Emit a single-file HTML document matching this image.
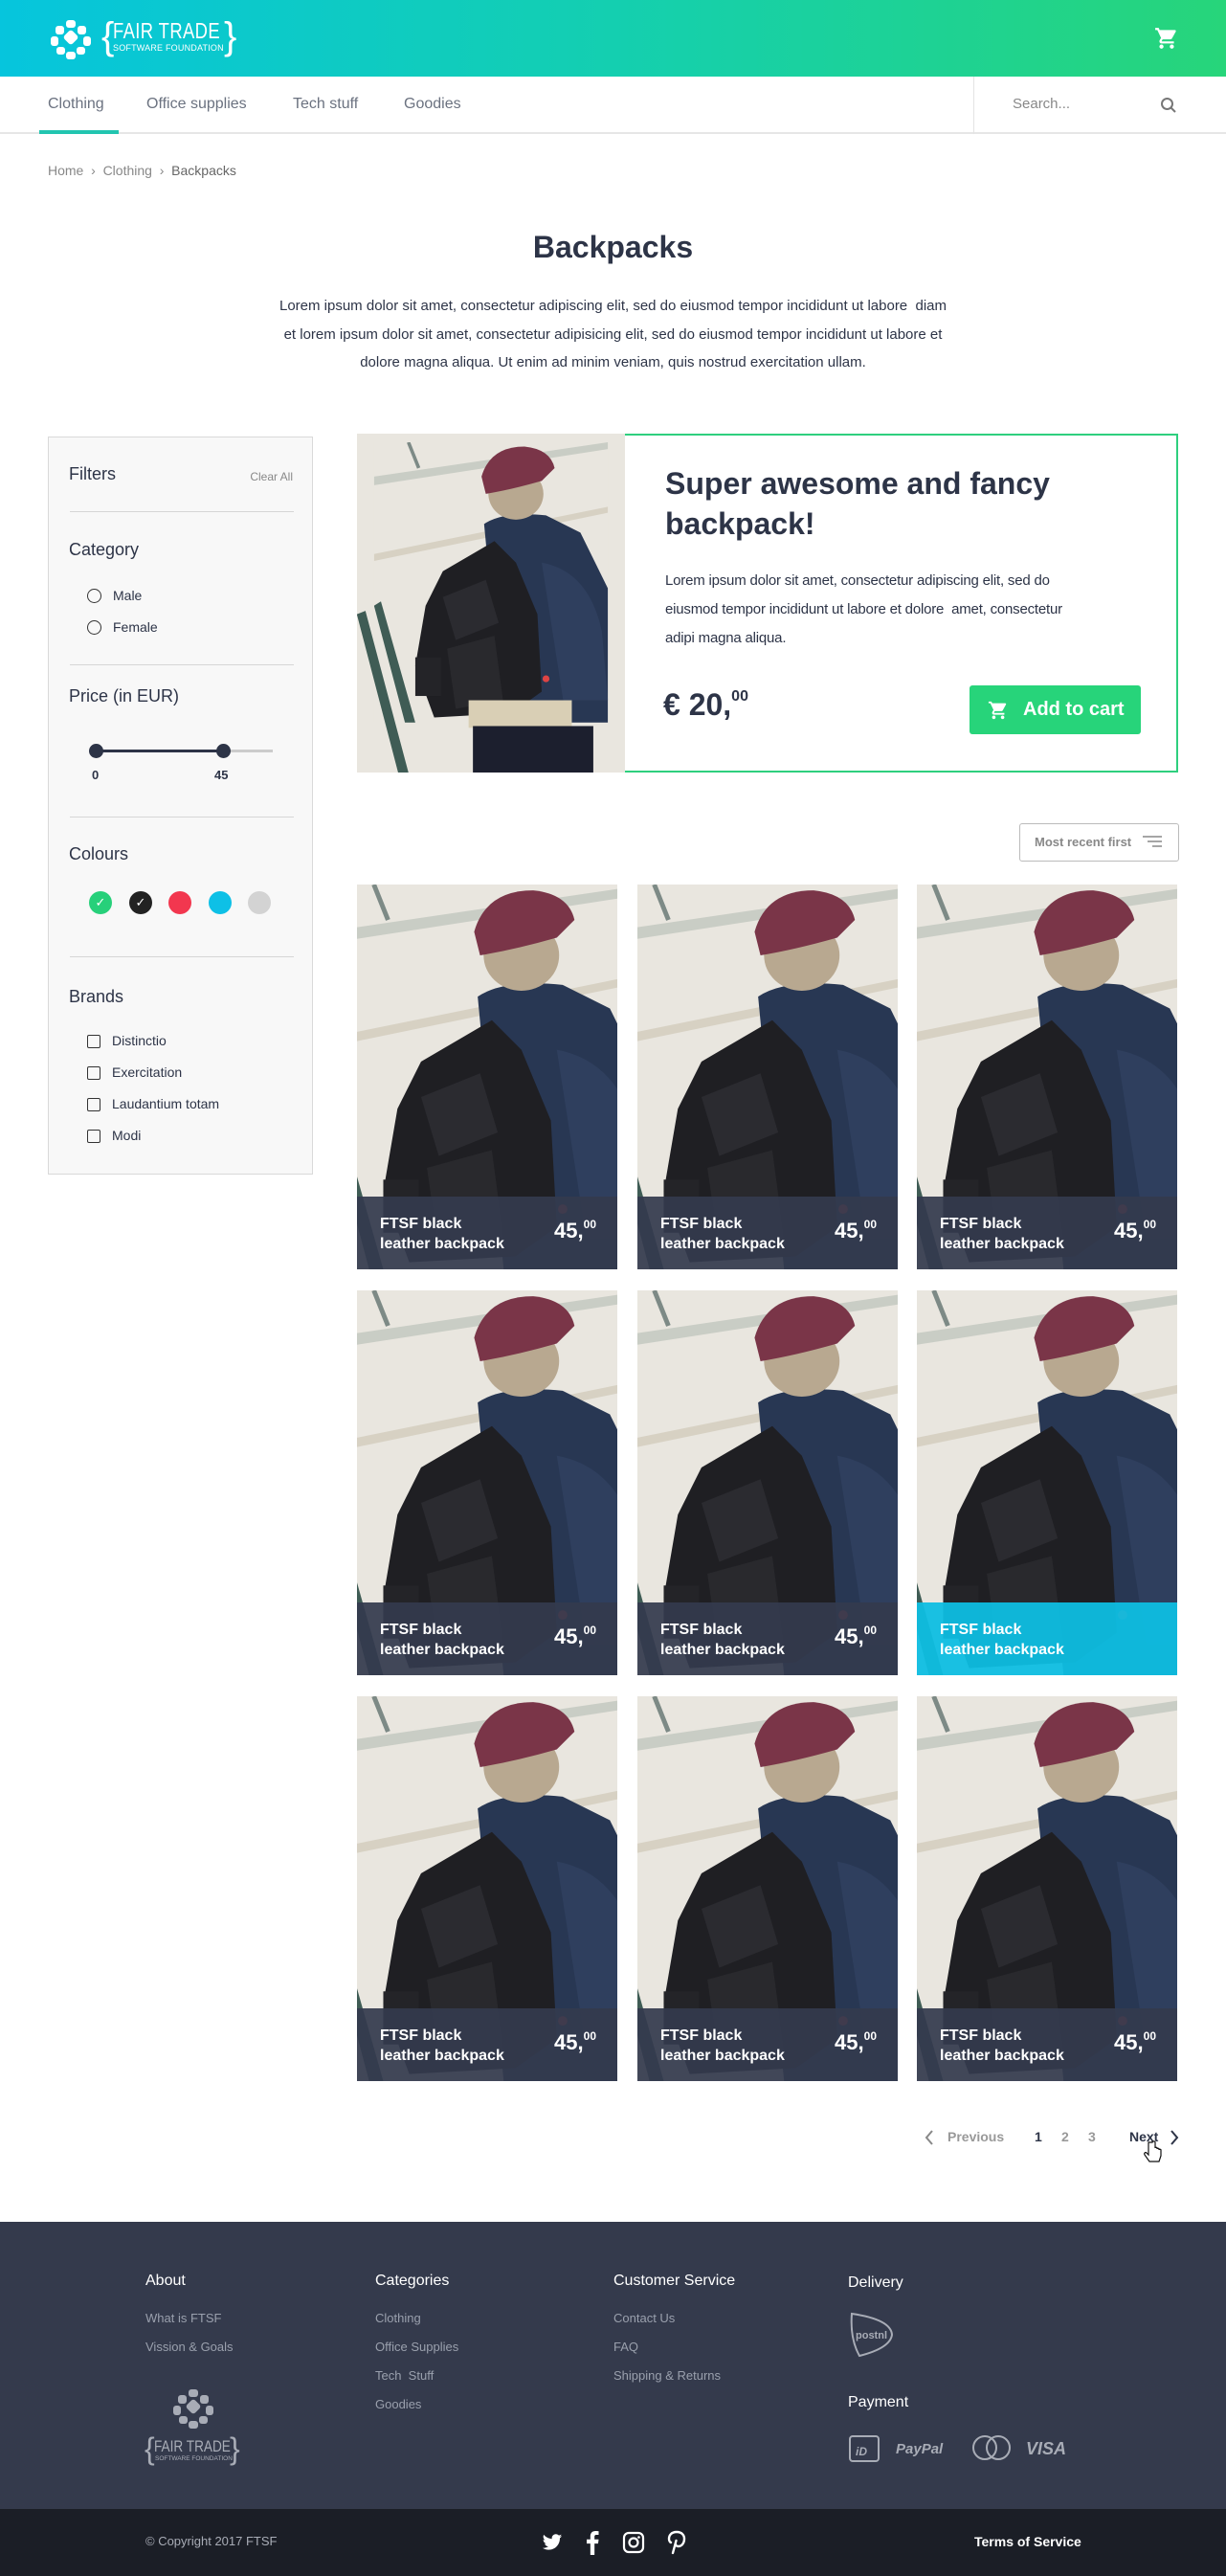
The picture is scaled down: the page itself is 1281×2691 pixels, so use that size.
<!DOCTYPE html>
<html><head><meta charset="utf-8">
<style>
*{margin:0;padding:0;box-sizing:border-box}
body{width:1281px;height:2691px;position:relative;background:#fff;font-family:"Liberation Sans",sans-serif;color:#2d3447;overflow:hidden}
.a{position:absolute;white-space:nowrap}
.hdr{position:absolute;left:0;top:0;width:1281px;height:80px;background:linear-gradient(90deg,#06c5dd 0%,#14cfb0 50%,#27d57a 100%)}
.nav{position:absolute;left:0;top:80px;width:1281px;height:60px;border-bottom:2px solid #e6e6e6}
.nav .i{position:absolute;top:20px;font-size:16px;color:#6b7280}
.side{position:absolute;left:50px;top:456px;width:277px;height:771px;background:#f8f8f8;border:1px solid #d9d9d9}
.hr{position:absolute;left:22px;width:234px;height:1px;background:#d6d6d6}
.side .t{position:absolute;left:21px;font-size:18px;color:#2d3447}
.opt{position:absolute;left:40px;font-size:14px;color:#2d3447}
.rad{display:inline-block;width:15px;height:15px;border:1.5px solid #333;border-radius:50%;vertical-align:-3px;margin-right:12px}
.chk{display:inline-block;width:14px;height:14px;border:1.5px solid #333;border-radius:2px;vertical-align:-3px;margin-right:12px}
.dot{position:absolute;width:24px;height:24px;border-radius:50%;top:931px}
.card{position:absolute;width:272px;height:402px;overflow:hidden}
.card svg{position:absolute;left:0;top:0}
.cap{position:absolute;left:0;bottom:0;width:100%;height:76px;background:rgba(52,58,78,.93);color:#fff}
.cap .n{position:absolute;left:24px;top:18px;font-size:16px;line-height:21px;font-weight:bold}
.cap .p{position:absolute;right:22px;top:22px;font-size:22px;font-weight:bold}
.cap .p sup{font-size:12px;vertical-align:10px}
.ft{position:absolute;left:0;top:2321px;width:1281px;height:301px;background:#343a4c}
.fb{position:absolute;left:0;top:2621px;width:1281px;height:70px;background:#1b1e26}
.fh{position:absolute;font-size:16px;color:#fff}
.fl{position:absolute;font-size:13px;color:#9aa0ad}
</style></head><body>
<svg width="0" height="0" style="position:absolute">
<defs>
<symbol id="ph" viewBox="0 0 272 326">
<rect width="272" height="326" fill="#e9e6df"/>
<polygon points="0,40 272,0 272,8 0,50" fill="#c9cdc5"/>
<polygon points="0,130 272,75 272,82 0,138" fill="#d7d1c3"/>
<line x1="40" y1="0" x2="52" y2="30" stroke="#7d8a86" stroke-width="4"/>
<polygon points="0,190 8,185 48,326 36,326" fill="#3f5c55"/>
<path d="M128,95 Q150,80 200,85 L240,105 L272,170 L272,326 L150,326 Z" fill="#283753"/>
<path d="M195,140 Q250,150 265,220 L272,300 L220,300 Z" fill="#2f3f5e"/>
<ellipse cx="165" cy="60" rx="32" ry="30" fill="#b8a890"/>
<path d="M125,40 Q135,5 175,5 Q205,8 210,30 L195,45 Q160,55 130,60 Z" fill="#7a3548"/>
<path d="M80,150 L140,115 L165,140 L190,200 L195,290 L160,315 L70,320 L48,260 L60,190 Z" fill="#1f1f23"/>
<path d="M80,180 L130,160 L145,210 L95,230 Z" fill="#2b2b30"/>
<path d="M85,240 L140,225 L150,300 L95,310 Z" fill="#29292d"/>
<rect x="48" y="250" width="30" height="45" fill="#242428"/>
<circle cx="200" cy="275" r="4" fill="#d44"/>
</symbol>
</defs>
</svg>

<div class="hdr">
<svg class="a" style="left:50px;top:17px" width="48" height="48" viewBox="0 0 48 48"><g fill="#fff"><rect x="19" y="4" width="10" height="8" rx="3"/><rect x="8" y="10" width="9" height="9" rx="3"/><rect x="31" y="10" width="9" height="9" rx="3"/><rect x="18" y="16" width="12" height="12" rx="3" transform="rotate(45 24 22)"/><rect x="3" y="21" width="8" height="10" rx="3"/><rect x="37" y="21" width="8" height="10" rx="3"/><rect x="9" y="32" width="9" height="8" rx="3"/><rect x="30" y="32" width="9" height="8" rx="3"/><rect x="19" y="37" width="10" height="8" rx="3"/></g></svg>
<div class="a" style="left:106px;top:14px;color:#fff;font-size:40px;line-height:48px;font-weight:200">{</div>
<div class="a" style="left:118px;top:19px;color:#fff;font-size:23px;letter-spacing:0.5px;transform:scaleX(.8);transform-origin:left">FAIR TRADE</div>
<div class="a" style="left:118px;top:45px;color:#fff;font-size:9px;letter-spacing:0.2px">SOFTWARE FOUNDATION</div>
<div class="a" style="left:234px;top:14px;color:#fff;font-size:40px;line-height:48px;font-weight:200">}</div>
<svg class="a" style="left:1206px;top:27px" width="26" height="26" viewBox="0 0 24 24"><path fill="#fff" d="M7 18c-1.1 0-2 .9-2 2s.9 2 2 2 2-.9 2-2-.9-2-2-2zM1 2v2h2l3.6 7.6-1.4 2.4c-.1.3-.2.6-.2 1 0 1.1.9 2 2 2h12v-2H7.4c-.1 0-.2-.1-.2-.2v-.1l.9-1.7h7.4c.8 0 1.4-.4 1.7-1l3.6-6.5c.1-.2.1-.3.1-.5 0-.6-.4-1-1-1H5.2l-.9-2H1zm16 16c-1.1 0-2 .9-2 2s.9 2 2 2 2-.9 2-2-.9-2-2-2z"/></svg>
</div>

<div class="nav">
<div class="i" style="left:50px">Clothing</div>
<div class="a" style="left:41px;top:56px;width:83px;height:4px;background:#22c5b0"></div>
<div class="i" style="left:153px">Office supplies</div>
<div class="i" style="left:306px">Tech stuff</div>
<div class="i" style="left:422px">Goodies</div>
<div class="a" style="left:1017px;top:0;width:1px;height:60px;background:#e3e3e3"></div>
<div class="i" style="left:1058px;font-size:15px;color:#888">Search...</div>
<svg class="a" style="left:1212px;top:21px" width="18" height="18" viewBox="0 0 18 18"><circle cx="7.5" cy="7.5" r="5.5" fill="none" stroke="#777" stroke-width="2"/><line x1="11.5" y1="11.5" x2="16" y2="16" stroke="#777" stroke-width="2"/></svg>
</div>

<div class="a" style="left:50px;top:170px;font-size:14px;color:#888">Home &nbsp;›&nbsp; Clothing &nbsp;›&nbsp; <span style="color:#666">Backpacks</span></div>

<div class="a" style="left:0;width:1281px;top:240px;text-align:center;font-size:32px;font-weight:bold;color:#2d3447">Backpacks</div>
<div class="a" style="left:230px;width:821px;top:305px;text-align:center;font-size:15px;line-height:29.5px;color:#2d3447;white-space:normal">Lorem ipsum dolor sit amet, consectetur adipiscing elit, sed do eiusmod tempor incididunt ut labore&nbsp; diam<br>et lorem ipsum dolor sit amet, consectetur adipisicing elit, sed do eiusmod tempor incididunt ut labore et<br>dolore magna aliqua. Ut enim ad minim veniam, quis nostrud exercitation ullam.</div>

<div class="side">
<div class="t" style="top:28px;font-size:18px">Filters</div>
<div class="a" style="right:20px;top:34px;font-size:12px;color:#888">Clear All</div>
<div class="hr" style="top:77px"></div>
<div class="t" style="top:107px">Category</div>
<div class="opt" style="top:157px"><span class="rad"></span>Male</div>
<div class="opt" style="top:190px"><span class="rad"></span>Female</div>
<div class="hr" style="top:237px"></div>
<div class="t" style="top:260px">Price (in EUR)</div>
<div class="a" style="left:49px;top:326px;width:185px;height:3px;background:#ccc"></div>
<div class="a" style="left:49px;top:326px;width:133px;height:3px;background:#2d3447"></div>
<div class="a" style="left:42px;top:320px;width:15px;height:15px;border-radius:50%;background:#2d3447"></div>
<div class="a" style="left:175px;top:320px;width:15px;height:15px;border-radius:50%;background:#2d3447"></div>
<div class="a" style="left:45px;top:345px;font-size:13px;font-weight:bold">0</div>
<div class="a" style="left:173px;top:345px;font-size:13px;font-weight:bold">45</div>
<div class="hr" style="top:396px"></div>
<div class="t" style="top:425px">Colours</div>
<div class="hr" style="top:542px"></div>
<div class="t" style="top:574px">Brands</div>
<div class="opt" style="top:622px"><span class="chk"></span>Distinctio</div>
<div class="opt" style="top:655px"><span class="chk"></span>Exercitation</div>
<div class="opt" style="top:688px"><span class="chk"></span>Laudantium totam</div>
<div class="opt" style="top:721px"><span class="chk"></span>Modi</div>
</div>
<div class="dot" style="left:93px;background:#27d07a;color:#fff;font-size:13px;text-align:center;line-height:24px">✓</div>
<div class="dot" style="left:135px;background:#222;color:#fff;font-size:13px;text-align:center;line-height:24px">✓</div>
<div class="dot" style="left:176px;background:#f2374f"></div>
<div class="dot" style="left:218px;background:#0ec0e6"></div>
<div class="dot" style="left:259px;background:#d3d3d3"></div>

<!-- featured -->
<div class="a" style="left:373px;top:453px;width:858px;height:354px;border:2px solid #2ecf7e"></div>
<svg class="a" style="left:373px;top:453px" width="280" height="354" viewBox="-20 -10 312 394" preserveAspectRatio="xMidYMid slice"><rect x="-20" y="-10" width="312" height="394" fill="#e9e6df"/><use href="#ph" width="272" height="326"/><rect x="110" y="300" width="120" height="32" fill="#d9cfb5"/><rect x="115" y="330" width="140" height="60" fill="#1c1f2e"/><polygon points="-20,200 -10,196 40,384 28,384" fill="#3f5c55"/></svg>
<div class="a" style="left:695px;top:484px;font-size:32px;line-height:42px;font-weight:bold;color:#2d3447;white-space:normal;width:480px">Super awesome and fancy<br>backpack!</div>
<div class="a" style="left:695px;top:592px;font-size:15px;line-height:30px;color:#2d3447;letter-spacing:-0.2px">Lorem ipsum dolor sit amet, consectetur adipiscing elit, sed do<br>eiusmod tempor incididunt ut labore et dolore&nbsp; amet, consectetur<br>adipi magna aliqua.</div>
<div class="a" style="left:693px;top:718px;font-size:32px;font-weight:bold;color:#2d3447">€ 20,<sup style="font-size:16px;vertical-align:15px">00</sup></div>
<div class="a" style="left:1013px;top:716px;width:179px;height:51px;background:#27d47a;border-radius:3px;color:#fff;font-size:20px;line-height:51px;font-weight:bold;padding-left:56px">Add to cart</div>
<svg class="a" style="left:1032px;top:731px" width="22" height="22" viewBox="0 0 24 24"><path fill="#fff" d="M7 18c-1.1 0-2 .9-2 2s.9 2 2 2 2-.9 2-2-.9-2-2-2zM1 2v2h2l3.6 7.6-1.4 2.4c-.1.3-.2.6-.2 1 0 1.1.9 2 2 2h12v-2H7.4c-.1 0-.2-.1-.2-.2v-.1l.9-1.7h7.4c.8 0 1.4-.4 1.7-1l3.6-6.5c.1-.2.1-.3.1-.5 0-.6-.4-1-1-1H5.2l-.9-2H1zm16 16c-1.1 0-2 .9-2 2s.9 2 2 2 2-.9 2-2-.9-2-2-2z"/></svg>

<div class="a" style="left:1065px;top:860px;width:167px;height:40px;border:1px solid #bbb;border-radius:3px"></div>
<div class="a" style="left:1081px;top:872px;font-size:13px;font-weight:bold;color:#888">Most recent first</div>
<svg class="a" style="left:1194px;top:872px" width="20" height="14"><g stroke="#888" stroke-width="1.5"><line x1="0" y1="2" x2="20" y2="2"/><line x1="5" y1="7" x2="20" y2="7"/><line x1="10" y1="12" x2="20" y2="12"/></g></svg>

<!-- grid -->
<div class="card" style="left:373px;top:924px"><svg width="272" height="402" viewBox="0 0 272 326" preserveAspectRatio="xMidYMin slice"><use href="#ph"/></svg><div class="cap"><div class="n">FTSF black<br>leather backpack</div><div class="p">45,<sup>00</sup></div></div></div>
<div class="card" style="left:666px;top:924px"><svg width="272" height="402" viewBox="0 0 272 326" preserveAspectRatio="xMidYMin slice"><use href="#ph"/></svg><div class="cap"><div class="n">FTSF black<br>leather backpack</div><div class="p">45,<sup>00</sup></div></div></div>
<div class="card" style="left:958px;top:924px"><svg width="272" height="402" viewBox="0 0 272 326" preserveAspectRatio="xMidYMin slice"><use href="#ph"/></svg><div class="cap"><div class="n">FTSF black<br>leather backpack</div><div class="p">45,<sup>00</sup></div></div></div>

<div class="card" style="left:373px;top:1348px"><svg width="272" height="402" viewBox="0 0 272 326" preserveAspectRatio="xMidYMin slice"><use href="#ph"/></svg><div class="cap"><div class="n">FTSF black<br>leather backpack</div><div class="p">45,<sup>00</sup></div></div></div>
<div class="card" style="left:666px;top:1348px"><svg width="272" height="402" viewBox="0 0 272 326" preserveAspectRatio="xMidYMin slice"><use href="#ph"/></svg><div class="cap"><div class="n">FTSF black<br>leather backpack</div><div class="p">45,<sup>00</sup></div></div></div>
<div class="card" style="left:958px;top:1348px"><svg width="272" height="402" viewBox="0 0 272 326" preserveAspectRatio="xMidYMin slice"><use href="#ph"/></svg><div class="cap" style="background:rgba(14,190,225,.95)"><div class="n">FTSF black<br>leather backpack</div></div></div>

<div class="card" style="left:373px;top:1772px"><svg width="272" height="402" viewBox="0 0 272 326" preserveAspectRatio="xMidYMin slice"><use href="#ph"/></svg><div class="cap"><div class="n">FTSF black<br>leather backpack</div><div class="p">45,<sup>00</sup></div></div></div>
<div class="card" style="left:666px;top:1772px"><svg width="272" height="402" viewBox="0 0 272 326" preserveAspectRatio="xMidYMin slice"><use href="#ph"/></svg><div class="cap"><div class="n">FTSF black<br>leather backpack</div><div class="p">45,<sup>00</sup></div></div></div>
<div class="card" style="left:958px;top:1772px"><svg width="272" height="402" viewBox="0 0 272 326" preserveAspectRatio="xMidYMin slice"><use href="#ph"/></svg><div class="cap"><div class="n">FTSF black<br>leather backpack</div><div class="p">45,<sup>00</sup></div></div></div>

<!-- pagination -->
<svg class="a" style="left:966px;top:2225px" width="10" height="16"><path d="M8 1L2 8l6 7" fill="none" stroke="#888" stroke-width="2"/></svg>
<div class="a" style="left:990px;top:2224px;font-size:14px;font-weight:bold;color:#999">Previous</div>
<div class="a" style="left:1081px;top:2224px;font-size:14px;font-weight:bold;color:#2d3447">1</div>
<div class="a" style="left:1109px;top:2224px;font-size:14px;font-weight:bold;color:#999">2</div>
<div class="a" style="left:1137px;top:2224px;font-size:14px;font-weight:bold;color:#999">3</div>
<div class="a" style="left:1180px;top:2224px;font-size:14px;font-weight:bold;color:#2d3447">Next</div>
<svg class="a" style="left:1222px;top:2225px" width="10" height="16"><path d="M2 1l6 7-6 7" fill="none" stroke="#2d3447" stroke-width="2"/></svg>
<svg class="a" style="left:1195px;top:2236px" width="20" height="24" viewBox="0 0 20 24"><path d="M5 2v13l-2-2c-1-1-3 0-2 2l5 7h10l2-6v-6c0-1-2-1-2 0v-1c0-1-2-1-2 0v-1c0-1-2-1-2 0V2c0-1.5-3-1.5-3 0z" fill="#fff" stroke="#111" stroke-width="1.2"/></svg>

<!-- footer -->
<div class="ft">
<div class="fh" style="left:152px;top:53px">About</div>
<div class="fl" style="left:152px;top:93px">What is FTSF</div>
<div class="fl" style="left:152px;top:123px">Vission &amp; Goals</div>
<svg class="a" style="left:178px;top:170px" width="48" height="50" viewBox="0 0 48 48"><g fill="#a8acb6"><rect x="19" y="4" width="10" height="8" rx="3"/><rect x="8" y="10" width="9" height="9" rx="3"/><rect x="31" y="10" width="9" height="9" rx="3"/><rect x="18" y="16" width="12" height="12" rx="3" transform="rotate(45 24 22)"/><rect x="3" y="21" width="8" height="10" rx="3"/><rect x="37" y="21" width="8" height="10" rx="3"/><rect x="9" y="32" width="9" height="8" rx="3"/><rect x="30" y="32" width="9" height="8" rx="3"/><rect x="19" y="37" width="10" height="8" rx="3"/></g></svg>
<div class="a" style="left:151px;top:220px;color:#a8acb6;font-size:32px;line-height:34px;font-weight:200">{</div>
<div class="a" style="left:161px;top:225px;color:#a8acb6;font-size:17px;transform:scaleX(.8);transform-origin:left">FAIR TRADE</div>
<div class="a" style="left:162px;top:244px;color:#a8acb6;font-size:6.5px">SOFTWARE FOUNDATION</div>
<div class="a" style="left:240px;top:220px;color:#a8acb6;font-size:32px;line-height:34px;font-weight:200">}</div>

<div class="fh" style="left:392px;top:53px">Categories</div>
<div class="fl" style="left:392px;top:93px">Clothing</div>
<div class="fl" style="left:392px;top:123px">Office Supplies</div>
<div class="fl" style="left:392px;top:153px">Tech&nbsp; Stuff</div>
<div class="fl" style="left:392px;top:183px">Goodies</div>

<div class="fh" style="left:641px;top:53px">Customer Service</div>
<div class="fl" style="left:641px;top:93px">Contact Us</div>
<div class="fl" style="left:641px;top:123px">FAQ</div>
<div class="fl" style="left:641px;top:153px">Shipping &amp; Returns</div>

<div class="fh" style="left:886px;top:55px">Delivery</div>
<svg class="a" style="left:886px;top:92px" width="50" height="50" viewBox="0 0 50 50"><path d="M4 4 Q45 10 46 26 Q44 40 12 48 Q2 30 4 4z" fill="none" stroke="#a8acb6" stroke-width="2"/><text x="8" y="30" font-size="11" font-weight="bold" fill="#a8acb6" font-family="Liberation Sans">postnl</text></svg>
<div class="fh" style="left:886px;top:180px">Payment</div>
<svg class="a" style="left:886px;top:220px" width="245" height="32" viewBox="0 0 245 32"><g fill="none" stroke="#a8acb6" stroke-width="2"><rect x="2" y="4" width="30" height="26" rx="3"/><circle cx="143" cy="16" r="12"/><circle cx="157" cy="16" r="12"/></g><g fill="#a8acb6" font-family="Liberation Sans" font-weight="bold" font-style="italic"><text x="8" y="24" font-size="12">iD</text><text x="50" y="22" font-size="15">PayPal</text><text x="186" y="23" font-size="18">VISA</text></g></svg>
</div>

<div class="fb">
<div class="a" style="left:152px;top:26px;font-size:13px;color:#a8acb6">© Copyright 2017 FTSF</div>
<svg class="a" style="left:565px;top:24px" width="24" height="22" viewBox="0 0 24 24"><path fill="#fff" d="M23 4.6c-.8.4-1.7.6-2.6.7.9-.6 1.6-1.4 2-2.5-.9.5-1.9.9-2.9 1.1C18.6 3 17.4 2.4 16.1 2.4c-2.5 0-4.5 2-4.5 4.5 0 .4 0 .7.1 1C7.9 7.7 4.6 5.900 2.4 3.2 2 3.9 1.8 4.6 1.8 5.5c0 1.6.8 2.9 2 3.8-.7 0-1.4-.2-2-.6v.1c0 2.2 1.6 4 3.6 4.4-.4.1-.8.2-1.2.2-.3 0-.6 0-.8-.1.6 1.800 2.2 3.1 4.2 3.1-1.5 1.2-3.5 1.9-5.6 1.9H1c2 1.3 4.4 2 6.9 2 8.3 0 12.8-6.9 12.8-12.8v-.6c.9-.6 1.7-1.4 2.3-2.3z"/></svg>
<svg class="a" style="left:612px;top:22px" width="14" height="26" viewBox="0 0 12 24"><path fill="#fff" d="M8 24V13h3.5l.5-4H8V6.5c0-1.1.3-1.9 1.9-1.9H12V1.1C11.6 1 10.4.9 9 .9 6 .9 4 2.7 4 6v3H.5v4H4v11z"/></svg>
<svg class="a" style="left:650px;top:23px" width="24" height="24" viewBox="0 0 24 24"><rect x="2" y="2" width="20" height="20" rx="5" fill="none" stroke="#fff" stroke-width="2.2"/><circle cx="12" cy="12" r="4.5" fill="none" stroke="#fff" stroke-width="2.2"/><circle cx="17.5" cy="6.5" r="1.3" fill="#fff"/></svg>
<svg class="a" style="left:697px;top:22px" width="20" height="26" viewBox="0 0 20 26"><path d="M6 24 L9.5 11 M10 2 C4 2 2 6 2 9 c0 2 1 3.5 2 4 M10 2 c6 0 8 4 8 7 c0 5-3 8-6 8 c-2 0-3-1-3-2" fill="none" stroke="#fff" stroke-width="2.4" stroke-linecap="round"/></svg>
<div class="a" style="left:1018px;top:26px;font-size:14px;font-weight:bold;color:#fff">Terms of Service</div>
</div>
</body></html>
